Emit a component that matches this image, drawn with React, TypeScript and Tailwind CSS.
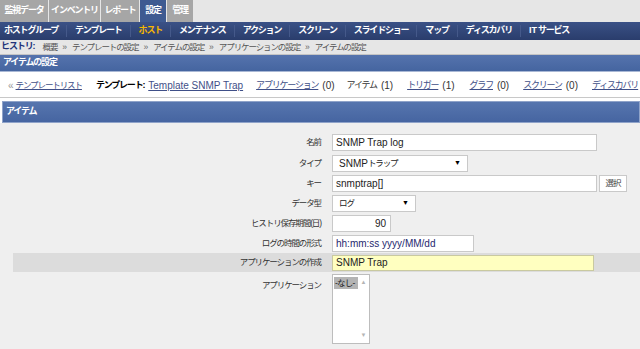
import React from 'react';

const TOP_TABS = [
  { label: '監視データ', w: 'w-[48px]', active: false },
  { label: 'インベントリ', w: 'w-[51px]', active: false },
  { label: 'レポート', w: 'w-[38px]', active: false },
  { label: '設定', w: 'w-[26px]', active: true },
  { label: '管理', w: 'w-[26px]', active: false },
];

const SUB_MENU = [
  'ホストグループ',
  'テンプレート',
  'ホスト',
  'メンテナンス',
  'アクション',
  'スクリーン',
  'スライドショー',
  'マップ',
  'ディスカバリ',
];

const CRUMBS = ['概要', 'テンプレートの設定', 'アイテムの設定', 'アプリケーションの設定', 'アイテムの設定'];

const font = "font-['Liberation_Sans','Noto_Sans_CJK_JP',sans-serif]";
// narrow japanese text, close to the bitmap gothic of the original
const jp = "text-[8.5px] tracking-[-1.1px]";
const jpm = "text-[9px] tracking-[-1.2px]";
const jpb = "text-[9px] tracking-[-1.2px] font-bold";

const Label: React.FC<{ children: React.ReactNode }> = ({ children }) => (
  <div className={`w-[322px] shrink-0 text-right pr-[1px] text-[#333] ${jp}`}>{children}</div>
);

const SelectBox: React.FC<{ children: React.ReactNode; width: string }> = ({ children, width }) => (
  <div className={`${width} h-[17px] bg-white border border-[#c9c9c9] flex items-center justify-between pl-[6px] pr-[6px] text-[#222]`}>
    <span className="flex items-center">{children}</span>
    <span className="text-[7px] text-black">▼</span>
  </div>
);

const Link: React.FC<{ children: React.ReactNode; cls?: string }> = ({ children, cls = '' }) => (
  <span className={`underline text-[#3f4f88] ${cls}`}>{children}</span>
);

export default function App() {
  return (
    <div className={`w-[640px] h-[349px] overflow-hidden bg-[#efefef] ${font}`}>
      {/* top tabs */}
      <div className="h-[22px] bg-[#e6e6e6] flex gap-[1px]">
        {TOP_TABS.map(t => (
          <div
            key={t.label}
            className={`${t.w} h-full flex items-center justify-center text-white whitespace-nowrap ${jpb} ${t.active ? 'bg-[#3e5a91]' : 'bg-[#a6a6a6]'}`}
          >
            {t.label}
          </div>
        ))}
      </div>

      {/* sub menu */}
      <div className="h-[18px] bg-gradient-to-b from-[#3a5186] to-[#2a3d6c] flex items-center pl-[4px] whitespace-nowrap">
        {SUB_MENU.map((m, i) => (
          <div key={m} className="flex items-center">
            {i > 0 && <div className="w-px h-[12px] bg-[#45598a] mx-[8px]" />}
            <span className={`${jpb} ${m === 'ホスト' ? 'text-[#f5b700]' : 'text-white'}`}>{m}</span>
          </div>
        ))}
        <div className="w-px h-[12px] bg-[#45598a] mx-[8px]" />
        <span className="text-[9px] font-bold text-white">IT</span>
        <span className={`${jpb} text-white ml-[1px]`}>サービス</span>
      </div>

      {/* breadcrumb */}
      <div className={`h-[15px] bg-[#e6e6e6] border-b border-[#c4c4c4] flex items-center pl-[1px] whitespace-nowrap ${jp}`}>
        <span className="font-bold text-[#21337a] mr-[8px] text-[9px]">ヒストリ:</span>
        {CRUMBS.map((c, i) => (
          <span key={i} className="text-[#555] flex items-center">
            {i > 0 && <span className="mx-[5px] tracking-normal text-[#666]">»</span>}
            {c}
          </span>
        ))}
      </div>

      {/* page header */}
      <div className={`h-[17px] bg-gradient-to-b from-[#5573ad] to-[#4565a0] flex items-center pl-[3px] text-white border-b border-[#a9b8d5] ${jpb}`}>
        アイテムの設定
      </div>

      {/* template links */}
      <div className="h-[26px] bg-white flex items-center pl-[8px] pt-[2px] text-[10px] text-[#333] whitespace-nowrap overflow-hidden border-b border-[#c8c8c8]">
        <span className="text-[#999] mr-[2px]">«</span>
        <Link cls={jp}>テンプレートリスト</Link>
        <span className={`ml-[14px] text-black ${jpb}`}>テンプレート:</span>
        <Link cls="ml-[4px]">Template SNMP Trap</Link>
        <Link cls={`ml-[13px] ${jpm}`}>アプリケーション</Link>
        <span className="ml-[4px]">(0)</span>
        <span className={`ml-[12px] ${jpm}`}>アイテム</span>
        <span className="ml-[4px]">(1)</span>
        <Link cls={`ml-[14px] ${jpm}`}>トリガー</Link>
        <span className="ml-[4px]">(1)</span>
        <Link cls={`ml-[15px] ${jpm}`}>グラフ</Link>
        <span className="ml-[4px]">(0)</span>
        <Link cls={`ml-[14px] ${jpm}`}>スクリーン</Link>
        <span className="ml-[4px]">(0)</span>
        <Link cls={`ml-[14px] ${jpm}`}>ディスカバリ</Link>
      </div>

      {/* item header */}
      <div className="pt-[3px] bg-white">
        <div className={`h-[22px] ml-[2px] bg-gradient-to-b from-[#5675ae] to-[#4665a1] border border-[#8fa3c9] flex items-center pl-[3px] text-white ${jpb}`}>
          アイテム
        </div>
      </div>

      {/* form */}
      <div className="pt-[11px] flex flex-col text-[10px]">
        <div className="flex items-center gap-[10px] h-[17px]">
          <Label>名前</Label>
          <div className="w-[265px] h-[17px] bg-white border border-[#c9c9c9] flex items-center pl-[3px] text-[#222]">SNMP Trap log</div>
        </div>

        <div className="flex items-center gap-[10px] h-[17px] mt-[4px]">
          <Label>タイプ</Label>
          <SelectBox width="w-[136px]">
            <span>SNMP</span>
            <span className={jp}>トラップ</span>
          </SelectBox>
        </div>

        <div className="flex items-center gap-[10px] h-[17px] mt-[3px]">
          <Label>キー</Label>
          <div className="w-[265px] h-[17px] bg-white border border-[#c9c9c9] flex items-center pl-[3px] text-[#222]">snmptrap[]</div>
          <div className={`-ml-[8px] w-[28px] h-[17px] bg-white border border-[#c9c9c9] flex items-center justify-center text-[#444] ${jp}`}>選択</div>
        </div>

        <div className="flex items-center gap-[10px] h-[17px] mt-[3px]">
          <Label>データ型</Label>
          <SelectBox width="w-[84px]">
            <span className={jp}>ログ</span>
          </SelectBox>
        </div>

        <div className="flex items-center gap-[10px] h-[17px] mt-[3px]">
          <Label>ヒストリ保存期間(日)</Label>
          <div className="w-[59px] h-[17px] bg-white border border-[#c9c9c9] flex items-center justify-end pr-[4px] text-[#222]">90</div>
        </div>

        <div className="flex items-center gap-[10px] h-[17px] mt-[3px]">
          <Label>ログの時間の形式</Label>
          <div className="w-[142px] h-[17px] bg-white border border-[#c9c9c9] flex items-center pl-[3px] text-[#26286e]">hh:mm:ss yyyy/MM/dd</div>
        </div>

        <div className="mt-[1px] ml-[13px] h-[19px] bg-[#dcdcdc] flex items-center gap-[10px]">
          <div className={`w-[309px] shrink-0 text-right pr-[1px] text-[#333] ${jp}`}>アプリケーションの作成</div>
          <div className="w-[262px] h-[16px] bg-[#ffffc0] border border-[#c9c9a0] flex items-center pl-[3px] text-[#222]">SNMP Trap</div>
        </div>

        <div className="flex items-start gap-[10px] mt-[2px]">
          <div className="pt-[5px]"><Label>アプリケーション</Label></div>
          <div className="w-[38px] h-[70px] bg-white border border-[#bdbdbd] flex">
            <div className="flex-1 pt-[2px] pl-[1px]">
              <div className="bg-[#b4b4b4] text-[#222] leading-[12px] whitespace-nowrap text-[8.5px] tracking-[-0.8px] pl-[1px]">-なし-</div>
            </div>
            <div className="w-[11px] bg-white flex flex-col justify-between items-center py-[3px] text-[6px] text-[#b5b5b5]">
              <span>▲</span>
              <span>▼</span>
            </div>
          </div>
        </div>
      </div>
    </div>
  );
}
